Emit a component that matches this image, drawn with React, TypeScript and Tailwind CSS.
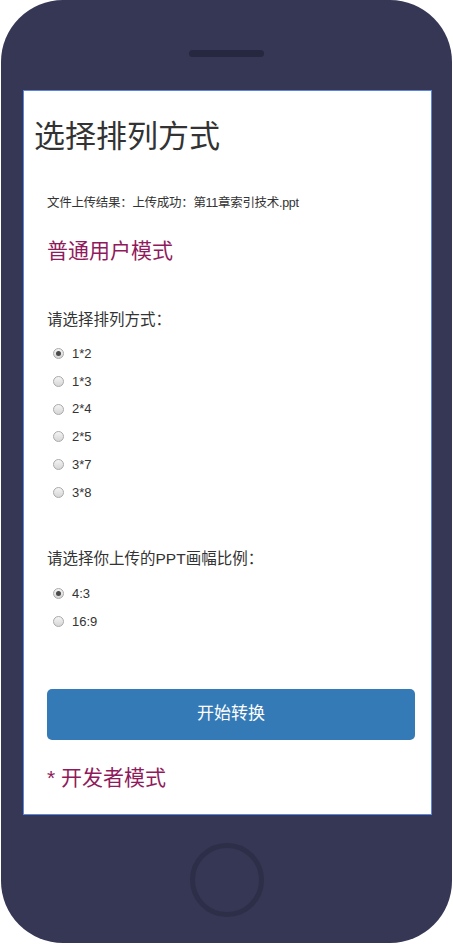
import { useState } from 'react'

const layouts = ['1*2', '1*3', '2*4', '2*5', '3*7', '3*8']
const ratios = ['4:3', '16:9']

function Radio({ label, checked, onClick }: { label: string; checked: boolean; onClick: () => void }) {
  return (
    <div className="flex h-[27.7px] items-center cursor-pointer" onClick={onClick}>
      <span className="ml-[6px] flex h-[11px] w-[11px] items-center justify-center rounded-full border border-[#a9a9a9] bg-gradient-to-b from-[#f4f4f4] to-[#d6d6d6]">
        {checked && <span className="h-[5px] w-[5px] rounded-full bg-[#4a4a4a]"></span>}
      </span>
      <span className="ml-[8px] text-[13px] text-[#333]">{label}</span>
    </div>
  )
}

export default function App() {
  const [layout, setLayout] = useState('1*2')
  const [ratio, setRatio] = useState('4:3')

  return (
    <div className="min-h-screen bg-white" style={{ fontFamily: '"Liberation Sans", "Noto Sans CJK SC", sans-serif' }}>
      <div className="ml-[1px] flex h-[943px] w-[451px] flex-col items-center rounded-[62px] bg-[#353755]">
        <div className="mt-[50px] h-[7px] w-[75px] rounded-full bg-[#262840]"></div>

        <div className="mt-[33px] ml-[22px] flex h-[725px] w-[409px] flex-col self-start border border-[#5b86e0] bg-white">
          <h1 className="mt-[26px] ml-[10px] h-[40px] text-[31px] leading-[40px] text-[#333]">选择排列方式</h1>

          <div className="pl-[23px] pr-[16px]">
            <p className="mt-[36px] h-[20px] text-[12.5px] leading-[20px] text-[#333] tracking-[-0.3px]">
              文件上传结果：上传成功：第11章索引技术.ppt
            </p>

            <h3 className="mt-[23px] h-[30px] text-[21px] leading-[30px] text-[#8f1b5c]">普通用户模式</h3>

            <p className="mt-[44px] h-[20px] text-[15.5px] leading-[20px] text-[#333]">请选择排列方式：</p>
            <div className="mt-[10px]">
              {layouts.map((l) => (
                <Radio key={l} label={l} checked={layout === l} onClick={() => setLayout(l)} />
              ))}
            </div>

            <p className="mt-[43px] h-[20px] text-[15.5px] leading-[20px] text-[#333]">请选择你上传的PPT画幅比例：</p>
            <div className="mt-[11px]">
              {ratios.map((r) => (
                <Radio key={r} label={r} checked={ratio === r} onClick={() => setRatio(r)} />
              ))}
            </div>

            <button className="mt-[53px] h-[51px] w-full rounded-[5px] bg-[#337ab7] text-[17px] text-white">
              开始转换
            </button>

            <h3 className="mt-[23px] h-[30px] text-[21px] leading-[30px] text-[#8f1b5c]">* 开发者模式</h3>
          </div>
        </div>

        <div className="mt-[28px] h-[74px] w-[74px] rounded-full border-[5px] border-[#2d2f48]"></div>
      </div>
    </div>
  )
}
